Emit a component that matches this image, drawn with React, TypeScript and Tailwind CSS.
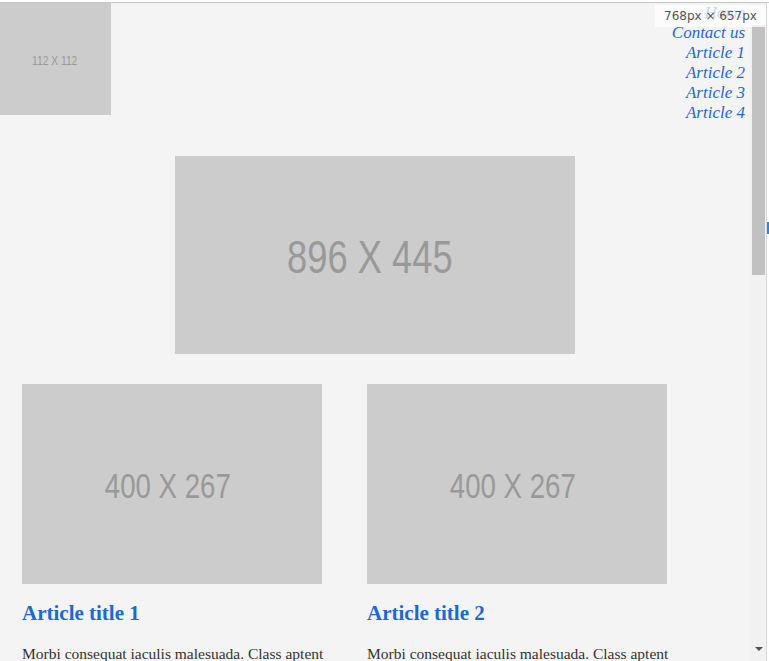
import React from "react";

const navLinks = ["Home", "Contact us", "Article 1", "Article 2", "Article 3", "Article 4"];

const articles = [
  { id: 1, title: "Article title 1" },
  { id: 2, title: "Article title 2" },
];

function Placeholder({ label, className, textClass }: { label: string; className: string; textClass: string }) {
  return (
    <div className={`flex items-center justify-center bg-[#cccccc] ${className}`}>
      <span
        className={`inline-block scale-x-[0.79] font-['Liberation_Sans',Arial,sans-serif] text-[#999999] ${textClass}`}
      >
        {label}
      </span>
    </div>
  );
}

export default function App() {
  return (
    <div className="relative flex h-[661px] w-[769px] flex-col overflow-hidden bg-[#f4f4f4]">
      {/* window frame top */}
      <div className="h-[2px] bg-white" />
      <div className="h-px bg-[#c6c6c6]" />

      <div className="flex min-h-0 flex-1">
        {/* Page */}
        <main className="w-[750px] font-['Liberation_Serif',Georgia,serif]">
          <header className="flex items-start justify-between">
            <Placeholder label="112 X 112" className="h-[112px] w-[111px] pr-[2px]" textClass="text-[13px] pt-[4px]" />
            <nav className="pr-[5px]">
              <ul className="text-right text-[17px] leading-[20px] italic text-[#1a6ad1]">
                {navLinks.map((link) => (
                  <li key={link}>{link}</li>
                ))}
              </ul>
            </nav>
          </header>

          {/* Hero */}
          <div className="mt-[33px] flex justify-center">
            <Placeholder label="896 X 445" className="h-[198px] w-[400px] pr-[10px]" textClass="text-[46px] pt-[5px]" />
          </div>

          {/* Articles */}
          <div className="mt-[30px] flex gap-[45px] pl-[22px]">
            {articles.map((article) => (
              <article key={article.id} className="w-[300px]">
                <Placeholder label="400 X 267" className="h-[200px] w-[300px] pr-[9px]" textClass="text-[35px] pt-[4px]" />
                <h2 className="mt-[17px] text-[21px] leading-[24px] font-bold text-[#1a6ad1]">
                  {article.title}
                </h2>
                <p className="mt-[18px] text-[15.5px] leading-[22px] whitespace-nowrap text-[#333333]">
                  Morbi consequat iaculis malesuada. Class aptent
                </p>
              </article>
            ))}
          </div>
        </main>

        {/* Scrollbar */}
        <div className="flex w-[16px] flex-col bg-[#f1f1f1] pt-[22px] pl-[2px]">
          <div className="h-[250px] w-[13px] bg-[#c1c1c1]" />
          <div className="flex-1" />
          <div className="flex h-[14px] items-start justify-center">
            <div className="h-0 w-0 border-x-[4px] border-t-[4px] border-x-transparent border-t-[#505050]" />
          </div>
        </div>

        {/* Window edge */}
        <div className="flex w-[3px] flex-col border-l border-[#d9d9d9] bg-white">
          <div className="mt-[219px] h-[12px] w-[2px] bg-[#2a86d8]" />
        </div>
      </div>

      {/* Size tooltip */}
      <div className="absolute top-[5px] left-[655px] flex h-[22px] w-[111px] items-center justify-center bg-white/75 font-['DejaVu_Sans',sans-serif] text-[12px] text-[#555555]">
        768px × 657px
      </div>
    </div>
  );
}
